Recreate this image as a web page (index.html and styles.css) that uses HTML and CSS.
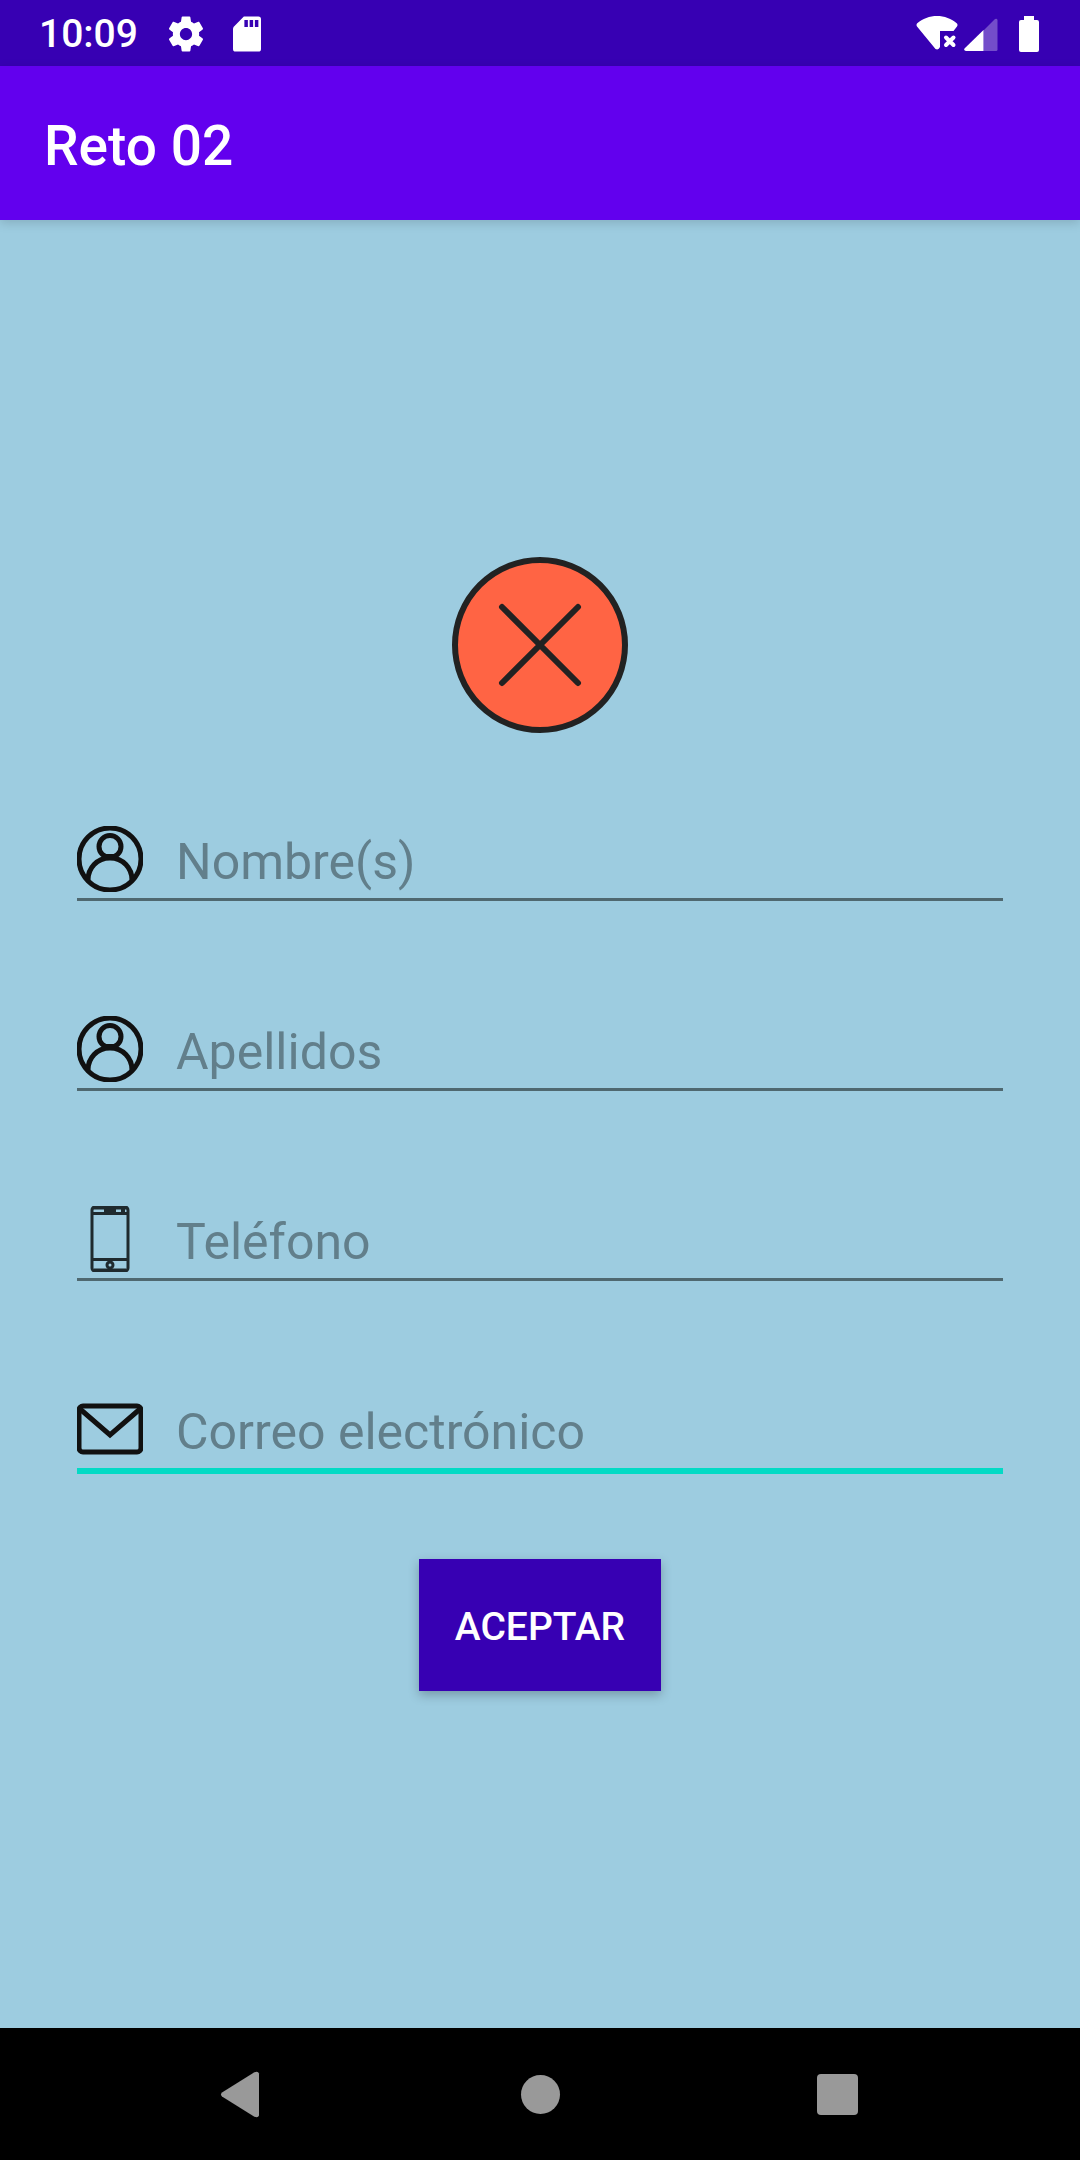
FILE: index.html
```html
<!DOCTYPE html>
<html lang="es">
<head>
<meta charset="utf-8">
<meta name="viewport" content="width=device-width, initial-scale=1">
<title>Reto 02</title>
<link rel="stylesheet" href="styles.css">
</head>
<body>
<div class="status-bar">
  <div class="status-group">
    <time class="clock">10:09</time>
    <svg class="status-icon" viewBox="0 0 24 24" aria-hidden="true"><path d="M19.43 12.98c.04-.32.07-.64.07-.98s-.03-.66-.07-.98l2.11-1.65c.19-.15.24-.42.12-.64l-2-3.46c-.12-.22-.39-.3-.61-.22l-2.49 1c-.52-.4-1.08-.73-1.69-.98l-.38-2.65C14.46 2.18 14.25 2 14 2h-4c-.25 0-.46.18-.49.42l-.38 2.65c-.61.25-1.17.59-1.69.98l-2.49-1c-.23-.09-.49 0-.61.22l-2 3.46c-.13.22-.07.49.12.64l2.11 1.65c-.04.32-.07.65-.07.98s.03.66.07.98l-2.11 1.65c-.19.15-.24.42-.12.64l2 3.46c.12.22.39.3.61.22l2.49-1c.52.4 1.08.73 1.69.98l.38 2.65c.03.24.24.42.49.42h4c.25 0 .46-.18.49-.42l.38-2.65c.61-.25 1.17-.59 1.69-.98l2.49 1c.23.09.49 0 .61-.22l2-3.46c.12-.22.07-.49-.12-.64l-2.11-1.65zM12 15.500c-1.930 0-3.500-1.570-3.500-3.500s1.570-3.500 3.500-3.500 3.500 1.570 3.500 3.500-1.570 3.500-3.500 3.500z"/></svg>
    <svg class="status-icon" viewBox="0 0 24 24" aria-hidden="true"><path d="M18.500 2h-8.300L4.300 8 4 9v11.500q0 1.500 1.500 1.500h13q1.500 0 1.500-1.500v-17q0-1.500-1.500-1.500zM12.500 8h-2V4h2v4zm3 0h-2V4h2v4zm3 0h-2V4h2v4z"/></svg>
  </div>
  <div class="status-group status-group-end">
    <svg width="42" height="36" viewBox="0 0 42 36" aria-hidden="true">
      <path d="M1 7.500C12-2.500 30-2.500 41 7.500Q42 9 41 10.500L37.500 15H24V31Q22.500 34.500 19.500 33L1 10.500Q0 9 1 7.500Z"/>
      <path class="thick-cross" d="M30 21.500l7.500 7.500M37.500 21.500L30 29"/>
    </svg>
    <svg class="signal" width="34" height="36" viewBox="0 0 34 36" aria-hidden="true">
      <path class="faint" d="M19.500 14.500 31 3q2-1 2.500 1v29.500q0 1.500-1.500 1.500H19.500Z"/>
      <path d="M19.500 14V35H2q-2.500-.5-1.500-2.500Z"/>
    </svg>
    <svg width="20" height="36" viewBox="0 0 20 36" aria-hidden="true"><path d="M5 0h10v4h3q2 0 2 2v28q0 2-2 2H2q-2 0-2-2V6q0-2 2-2h3Z"/></svg>
  </div>
</div>

<header class="app-bar"><h1 class="app-title">Reto 02</h1></header>

<main class="content">
  <svg class="badge" viewBox="0 0 176 176" aria-hidden="true">
    <circle cx="88" cy="88" r="85"/>
    <path d="M50 50l76 76M126 50l-76 76"/>
  </svg>
  <form class="form">
    <div class="fields">
      <label class="field">
        <svg class="field-icon" viewBox="0 0 66 66" aria-hidden="true"><circle cx="33" cy="33" r="31"/><circle cx="33" cy="20.500" r="11"/><path d="M27 30.500h12M11 54C11 42 20 32 33 32s22 10 22 22"/></svg>
        <input class="field-input" type="text" name="nombre" placeholder="Nombre(s)" aria-label="Nombre(s)">
      </label>
      <label class="field">
        <svg class="field-icon" viewBox="0 0 66 66" aria-hidden="true"><circle cx="33" cy="33" r="31"/><circle cx="33" cy="20.500" r="11"/><path d="M27 30.500h12M11 54C11 42 20 32 33 32s22 10 22 22"/></svg>
        <input class="field-input" type="text" name="apellidos" placeholder="Apellidos" aria-label="Apellidos">
      </label>
      <label class="field">
        <svg class="field-icon phone" viewBox="0 0 66 66" aria-hidden="true"><rect x="15" y="1" width="36" height="64" rx="3"/><path d="M15 7.500h36M15 53.500h36"/><path class="speaker" d="M27 4h12M46 2v5M16 1.500h34M17 64.500h32"/><circle cx="33" cy="59" r="3"/></svg>
        <input class="field-input" type="tel" name="telefono" placeholder="Teléfono" aria-label="Teléfono">
      </label>
      <label class="field field-active">
        <svg class="field-icon" viewBox="0 0 66 66" aria-hidden="true"><rect x="2" y="10" width="62" height="46" rx="4"/><path d="M3 13l30 26 30-26"/></svg>
        <input class="field-input" type="email" name="correo" placeholder="Correo electrónico" aria-label="Correo electrónico">
      </label>
    </div>
    <button class="submit" type="submit">ACEPTAR</button>
  </form>
</main>

<nav class="nav-bar" aria-label="Sistema">
  <button class="nav-button" type="button" aria-label="Atrás"><svg width="78" height="48" viewBox="0 0 78 48" aria-hidden="true"><path d="M19 22.500 51 2.500q4-2 5 1v42q-1 3-5 1L19 26.500q-2-2 0-4Z"/></svg></button>
  <button class="nav-button" type="button" aria-label="Inicio"><svg width="78" height="48" viewBox="0 0 78 48" aria-hidden="true"><circle cx="39.500" cy="24.500" r="19.500"/></svg></button>
  <button class="nav-button" type="button" aria-label="Recientes"><svg width="78" height="48" viewBox="0 0 78 48" aria-hidden="true"><rect x="18" y="4" width="41" height="41" rx="4"/></svg></button>
</nav>
</body>
</html>
```

FILE: styles.css
```css
* {
  box-sizing: border-box;
}

body {
  margin: 0;
  min-height: 100vh;
  display: flex;
  flex-direction: column;
  background: #9dcce0;
  font-family: Roboto, "Liberation Sans", sans-serif;
}

svg {
  display: block;
  flex: none;
}

.status-bar {
  display: flex;
  align-items: center;
  justify-content: space-between;
  height: 66px;
  padding: 2px 41px 0 39px;
  background: #3700b3;
  color: #fff;
  fill: #fff;
}

.status-group {
  display: flex;
  align-items: center;
  gap: 19px;
}

.status-group-end {
  gap: 6px;
}

.clock {
  margin-right: 8px;
  font-size: 39px;
  font-weight: 500;
  line-height: 46px;
}

.status-icon {
  width: 42px;
  height: 42px;
}

.signal {
  margin-right: 15px;
}

.faint {
  opacity: 0.3;
}

.thick-cross {
  stroke: #fff;
  stroke-width: 4;
  stroke-linecap: round;
}

.app-bar {
  display: flex;
  align-items: center;
  height: 154px;
  padding: 6px 44px 0;
  background: #6200ee;
  box-shadow: 0 3px 10px rgba(0, 0, 0, 0.15);
}

.app-title {
  margin: 0;
  color: #fff;
  font-size: 55px;
  font-weight: 500;
  line-height: 64px;
}

.content {
  flex: 1;
  display: flex;
  flex-direction: column;
  align-items: center;
  justify-content: center;
  padding: 0 77px;
}

.badge {
  width: 176px;
  height: 176px;
  margin-bottom: 93px;
  fill: #ff6444;
  stroke: #222;
  stroke-width: 6;
  stroke-linecap: round;
}

.form {
  display: flex;
  flex-direction: column;
  align-items: center;
  gap: 85px;
  width: 100%;
}

.fields {
  display: flex;
  flex-direction: column;
  gap: 115px;
  width: 100%;
}

.field {
  display: flex;
  align-items: center;
  gap: 33px;
  padding-bottom: 6px;
  border-bottom: 3px solid #4f6870;
}

.field-active {
  border-bottom: 6px solid #03dac5;
}

.field-icon {
  width: 66px;
  height: 66px;
  fill: none;
  stroke: #111;
  stroke-width: 5;
}

.phone {
  stroke: #1f2a2e;
  stroke-width: 3;
}

.speaker {
  stroke-width: 4;
}

.field-input {
  flex: 1;
  min-width: 0;
  height: 66px;
  padding: 5px 0 0;
  border: 0;
  outline: 0;
  background: transparent;
  color: #222;
  font-family: inherit;
  font-size: 50px;
  line-height: 60px;
}

.field-input::placeholder {
  color: #627f8b;
  opacity: 1;
}

.submit {
  height: 132px;
  padding: 4px 36px 0;
  border: 0;
  background: #3700b3;
  color: #fff;
  font-family: inherit;
  font-size: 39px;
  font-weight: 500;
  line-height: 46px;
  box-shadow: 0 4px 10px rgba(0, 0, 0, 0.25);
}

.nav-bar {
  display: flex;
  align-items: center;
  justify-content: center;
  gap: 220px;
  height: 132px;
  background: #000;
}

.nav-button {
  padding: 0;
  border: 0;
  background: none;
  fill: #999;
}
```
